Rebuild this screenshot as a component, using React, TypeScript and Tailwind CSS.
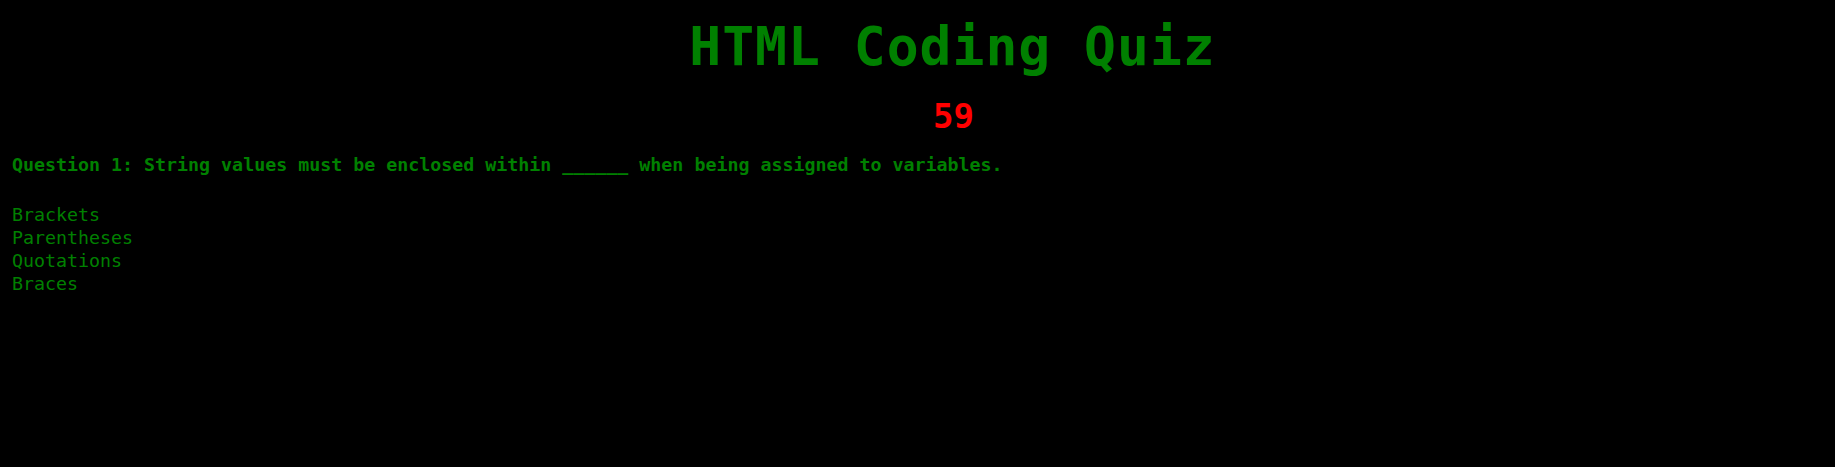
import React from "react";

export default function App() {
  const options = ["Brackets", "Parentheses", "Quotations", "Braces"];
  return (
    <div className="min-h-[467px] w-full bg-black text-[#008000] font-['DejaVu_Sans_Mono',monospace]">
      <div className="pt-[20px] pl-[70px]">
        <h1 className="text-center text-[53px] leading-[53px] font-bold tracking-[1px] text-[#008000]">
          HTML Coding Quiz
        </h1>
        <div className="mt-[26px] flex justify-center pl-[2px]">
          <span className="text-[34px] leading-[34px] font-bold text-[#ff0000]">59</span>
        </div>
      </div>
      <div className="pl-[12px] mt-[20px] text-[18.3px] leading-[23px]">
        <p className="font-bold">
          Question 1: String values must be enclosed within ______ when being assigned to variables.
        </p>
        <ul className="mt-[27px]">
          {options.map((o) => (
            <li key={o}>{o}</li>
          ))}
        </ul>
      </div>
    </div>
  );
}
